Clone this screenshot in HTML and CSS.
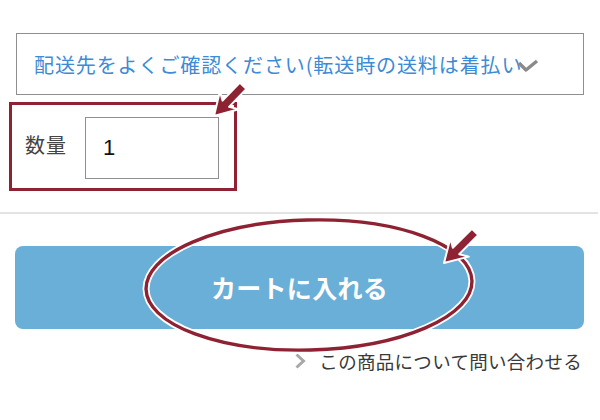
FILE: index.html
```html
<!DOCTYPE html>
<html lang="ja">
<head>
<meta charset="utf-8">
<link rel="stylesheet" href="styles.css">
</head>
<body>
<div class="page">
  <div class="wrap">
    <div class="select">
      <span class="select-text">配送先をよくご確認ください(転送時の送料は着払い</span>
      <svg class="chev" width="22" height="14" viewBox="0 0 22 14"><path d="M2 4 L9 11 L20 2" fill="none" stroke="#8a8a8a" stroke-width="3.4" stroke-linejoin="round"/></svg>
    </div>
    <div class="qty">
      <span class="qty-label">数量</span>
      <div class="qty-input">1</div>
    </div>
  </div>
  <hr class="divider">
  <div class="wrap">
    <button class="cart">カートに入れる</button>
    <div class="link-row">
      <svg class="link-chev" width="12" height="16" viewBox="0 0 12 16"><path d="M2.5 1.5 L9.5 8 L2.5 14.5" fill="none" stroke="#a8a8a8" stroke-width="3"/></svg>
      <span class="link-text">この商品について問い合わせる</span>
    </div>
  </div>
  <svg class="annot" width="600" height="420" viewBox="0 0 600 420">
    <ellipse cx="309" cy="285" rx="163" ry="65" fill="none" stroke="#fff" stroke-width="7" transform="rotate(-1.5 309 285)"/>
    <ellipse cx="309" cy="285" rx="163" ry="65" fill="none" stroke="#8e2233" stroke-width="3.4" transform="rotate(-1.5 309 285)"/>
    <g transform="translate(214 116) rotate(-46)">
      <polygon points="0,0 22,-13 17,-4.5 42,-4.5 42,4.5 17,4.5 22,13" fill="#8e2233" stroke="#fff" stroke-width="2" stroke-linejoin="round"/>
    </g>
    <g transform="translate(444 263) rotate(-45)">
      <polygon points="0,0 22,-13 17,-4.5 44,-4.5 44,4.5 17,4.5 22,13" fill="#8e2233" stroke="#fff" stroke-width="2" stroke-linejoin="round"/>
    </g>
  </svg>
</div>
</body>
</html>
```
FILE: styles.css
```css
* { box-sizing: border-box; }
html, body { margin: 0; padding: 0; background: #fff; }
body {
  font-family: "Noto Sans CJK JP", "Noto Sans", sans-serif;
  width: 600px;
  height: 420px;
  overflow: hidden;
}
.page { position: relative; width: 600px; height: 420px; display: flow-root; }
.wrap { padding: 0 16px 0 15px; }
.select {
  margin-top: 33px;
  margin-left: 1px;
  height: 62px;
  border: 1px solid #8f8f8f;
  display: flex;
  align-items: center;
  padding-left: 17px;
  position: relative;
}
.select-text {
  color: #3d8ad6;
  font-size: 20px;
  letter-spacing: 0.9px;
  white-space: nowrap;
}
.chev { position: absolute; left: 500px; top: 25px; }
.qty {
  margin-top: 7px;
  margin-left: -6px;
  width: 228px;
  height: 89px;
  border: 3px solid #8e2233;
  display: flex;
  align-items: center;
  padding-left: 13px;
}
.qty-label {
  font-size: 20px;
  color: #444;
  letter-spacing: 1px;
  width: 60px;
  flex: none;
  margin-top: -4px;
}
.qty-input {
  width: 134px;
  height: 62px;
  border: 1px solid #8f8f8f;
  margin-top: 2px;
  display: flex;
  align-items: center;
  padding-left: 17px;
  font-family: "Liberation Sans", Arial, sans-serif;
  font-size: 22px;
  color: #111;
}
.divider {
  margin: 21px 0 0 0;
  border: 0;
  height: 2px;
  background: #e3e3e3;
  width: 598px;
}
.cart {
  display: block;
  width: 569px;
  height: 83px;
  margin-top: 32px;
  border: 0;
  border-radius: 8px;
  background: #6aafd8;
  color: #fff;
  font-family: "Noto Sans CJK JP", sans-serif;
  font-weight: bold;
  font-size: 25px;
  letter-spacing: 0.3px;
  padding: 0 0 2px 0;
}
.link-row {
  display: flex;
  justify-content: flex-end;
  align-items: center;
  gap: 13px;
  margin-top: 19px;
  padding-right: 2px;
}
.link-text {
  font-size: 18.5px;
  color: #3a3a3a;
  letter-spacing: 0.3px;
}
.annot { position: absolute; left: 0; top: 0; pointer-events: none; }
```
